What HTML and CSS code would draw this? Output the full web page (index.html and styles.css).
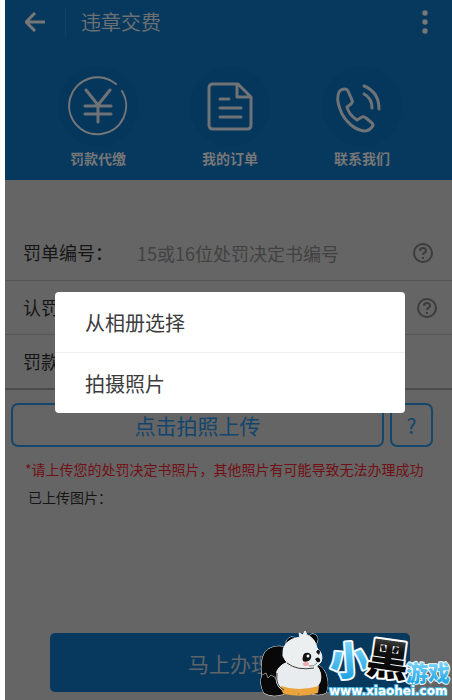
FILE: index.html
```html
<!DOCTYPE html>
<html lang="zh-CN">
<head>
<meta charset="utf-8">
<meta name="viewport" content="width=device-width, initial-scale=1">
<title>违章交费</title>
<link rel="stylesheet" href="styles.css">
</head>
<body>
<div class="screen">
  <header class="top">
    <div class="bar">
      <button class="icon-btn back" type="button" aria-label="返回">
        <svg width="20" height="20" viewBox="0 0 20 20"><path d="M10 1L1 10L10 19M1 10H20"/></svg>
      </button>
      <h1 class="title">违章交费</h1>
      <button class="icon-btn more" type="button" aria-label="更多">
        <svg width="6" height="26" viewBox="0 0 6 26"><circle cx="3" cy="4" r="2.700"/><circle cx="3" cy="13" r="2.700"/><circle cx="3" cy="22" r="2.700"/></svg>
      </button>
    </div>
    <nav class="shortcuts">
      <a class="shortcut" href="#pay">
        <span class="disc"><svg width="60" height="60" viewBox="0 0 60 60"><path d="M48 8A28.500 28.500 0 1 0 54 15"/><path class="bold" d="M18 14L30 29L42 14M30 29V46M17 30H43M17 38H43"/></svg></span>
        <span>罚款代缴</span>
      </a>
      <a class="shortcut" href="#orders">
        <span class="disc"><svg width="60" height="60" viewBox="0 0 60 60"><path class="bold" d="M37 8H13Q9 8 9 12V49Q9 53 13 53H47Q51 53 51 49V21L38 8H37V21H50M20 23H29M20 32H41M20 41H41"/></svg></span>
        <span>我的订单</span>
      </a>
      <a class="shortcut" href="#contact">
        <span class="disc"><svg width="60" height="60" viewBox="0 0 60 60"><path class="bold" d="M7 16Q9 13 13 13Q15 13 16 15L20 24Q21 26 19 28L15 31Q17 39 25 44L30 41Q32 40 34 42L40 47Q42 49 40 51Q37 55 32 55Q25 54 19 49Q11 42 8 33Q4 23 7 16ZM32 18Q40 22 40 32M32 10Q47 16 47 33"/></svg></span>
        <span>联系我们</span>
      </a>
    </nav>
  </header>

  <form class="form">
    <div class="rows">
      <div class="row">
        <label for="ticket">罚单编号：</label>
        <input id="ticket" type="text" placeholder="15或16位处罚决定书编号">
        <button class="help help-inset" type="button" aria-label="罚单编号说明"><svg width="22" height="22" viewBox="0 0 22 22"><circle cx="11" cy="11" r="9"/><path d="M8 9Q8 6 11 6Q14 6 14 9Q14 10 12 11Q11 12 11 13M11 15V17"/></svg></button>
      </div>
      <div class="row">
        <label for="confirm">认罚</label>
        <input id="confirm" type="text">
        <button class="help" type="button" aria-label="认罚说明"><svg width="22" height="22" viewBox="0 0 22 22"><circle cx="11" cy="11" r="9"/><path d="M8 9Q8 6 11 6Q14 6 14 9Q14 10 12 11Q11 12 11 13M11 15V17"/></svg></button>
      </div>
      <div class="row">
        <label for="amount">罚款</label>
        <input id="amount" type="text">
      </div>
    </div>
    <div class="upload">
      <button class="outline upload-main" type="button">点击拍照上传</button>
      <button class="outline upload-help" type="button">?</button>
    </div>
    <p class="warning">*请上传您的处罚决定书照片，其他照片有可能导致无法办理成功</p>
    <p class="uploaded">已上传图片：</p>
    <button class="submit" type="submit">马上办理</button>
  </form>

  <div class="menu" role="dialog" aria-label="选择图片">
    <button class="menu-item" type="button">从相册选择</button>
    <button class="menu-item" type="button">拍摄照片</button>
  </div>

  <svg class="brand" width="202" height="80" viewBox="0 0 202 80" role="img" aria-label="小黑游戏">
    <defs>
      <linearGradient id="sky" x1="0" y1="0" x2="0" y2="1"><stop offset="0" stop-color="#9ee4ff"/><stop offset="1" stop-color="#0a9be0"/></linearGradient>
      <linearGradient id="ink" x1="0" y1="0" x2="0" y2="1"><stop offset="0" stop-color="#777"/><stop offset=".4" stop-color="#111"/><stop offset="1" stop-color="#000"/></linearGradient>
    </defs>
    <g class="panda-edge">
      <path fill="#080808" d="M36 27Q22 24 15 32Q10 41 12 55Q9 64 14 73Q23 78 34 74L46 46ZM66 44Q75 47 77 58Q79 66 76 73Q67 77 58 72Z"/>
      <path fill="#080808" d="M38 28Q33 20 41 17Q47 17 48 22ZM59 17Q61 12 66 15Q70 20 65 25Z"/>
      <path fill="#e8ecee" d="M27 51Q31 43 40 42L66 45Q73 53 70 62Q66 71 58 73H39Q27 70 26 59Z"/>
      <path fill="#eceff0" d="M50 17L49 13L53 15L55 11L57 15Q65 18 67 28Q74 34 71 42Q65 50 52 49Q37 47 33 36Q31 20 50 17Z"/>
    </g>
    <path fill="#eba53c" d="M31 66Q48 72 69 66L68 73Q52 78 34 74Q31 71 31 66Z"/>
    <path fill="#111" d="M53 36Q54 32 59 33Q63 35 60 40Q56 43 53 41Q52 39 53 36ZM66 32Q69 27 70 32L69 35ZM65 39Q68 36 70 39Q71 43 67 42Z"/>
    <circle cx="58" cy="36" r="1.500" fill="#fff"/>
    <ellipse cx="56" cy="44" rx="3" ry="2" fill="#f7a9ad"/>
    <path class="panda-line" d="M59 46Q64 47 67 43M12 55L16 53L18 58L21 55L26 58M49 73L48 75"/>
    <path class="panda-line panda-dark" d="M37 43Q47 51 64 48M27 53Q25 66 34 70"/>
    <g class="brand-name">
      <text class="blue" x="80" y="55" font-size="39" transform="rotate(-4 98 45)">小</text>
      <text class="black" x="117" y="55" font-size="42" transform="rotate(8 138 40)">黑</text>
      <text class="blue game" x="156" y="61" font-size="22">游戏</text>
    </g>
    <text class="site" x="79" y="75" font-size="12">www.xiaohei.com</text>
  </svg>
</div>
</body>
</html>
```
FILE: styles.css
```css
* { box-sizing: border-box; }

body {
  margin: 0;
  background: #fff;
  color: #151515;
  font-family: "Noto Sans CJK SC", sans-serif;
}

button, input { font: inherit; color: inherit; }
button { padding: 0; border: 0; background: none; }
svg { display: block; }

.screen {
  position: relative;
  display: flex;
  flex-direction: column;
  min-height: 100vh;
  margin-left: 5px;
  background: #656565;
}

.top {
  height: 180px;
  background: #07395f;
  color: #777;
}

.bar {
  display: flex;
  align-items: center;
  height: 44px;
  padding: 0 24px 0 20px;
}

.icon-btn svg { fill: none; stroke: #777; stroke-width: 3; }
.icon-btn.more svg { fill: #777; stroke: none; }

.title {
  flex: 1;
  margin: 0 0 0 20px;
  padding-left: 15px;
  border-left: 1px solid #104067;
  color: #6c7073;
  font-size: 20px;
  font-weight: 400;
  line-height: 30px;
}

.shortcuts {
  display: grid;
  grid-template-columns: repeat(3, 1fr);
  padding: 22px 24px 0 27px;
}

.shortcut {
  display: flex;
  flex-direction: column;
  align-items: center;
  color: inherit;
  font-size: 14px;
  font-weight: 700;
  line-height: 20px;
  text-decoration: none;
}

.disc {
  display: grid;
  place-items: center;
  width: 80px;
  height: 80px;
  margin-bottom: 2px;
  border-radius: 50%;
  background: #05375d;
}

.disc svg {
  fill: none;
  stroke: #777;
  stroke-width: 2;
  stroke-linecap: round;
  stroke-linejoin: round;
}

.disc .bold { stroke: #6f7376; stroke-width: 3; }

.form {
  display: flex;
  flex: 1;
  flex-direction: column;
}

.rows {
  padding-top: 46px;
  border-bottom: 2px solid #4c4c4c;
}

.row {
  display: flex;
  align-items: center;
  height: 54px;
  padding: 0 14px 0 18px;
  font-size: 18px;
  line-height: 24px;
}

.row + .row { border-top: 1px solid #555; }
.row label { width: 114px; padding-bottom: 2px; }

.row input {
  flex: 1;
  min-width: 0;
  padding: 0;
  border: 0;
  outline: 0;
  background: none;
}

.row input::placeholder { color: #414141; opacity: 1; }
.help-inset { margin-right: 4px; }

.help svg {
  fill: none;
  stroke: #3c3c3c;
  stroke-width: 2;
}

.upload {
  display: flex;
  gap: 6px;
  padding: 13px 19px 0 6px;
}

.outline {
  height: 44px;
  border: 2px solid #15466b;
  border-radius: 7px;
  color: #12456d;
  font-size: 21px;
}

.upload-main { flex: 1; }
.upload-help { width: 43px; }

.warning, .uploaded {
  margin: 0;
  font-size: 14px;
  line-height: 20px;
}

.warning { padding: 12px 0 0 20px; color: #720f14; }
.uploaded { padding: 8px 0 0 23px; }

.submit {
  height: 59px;
  margin: auto 42px 8px 45px;
  border-radius: 5px;
  background: #07395f;
  color: #5f6468;
  font-size: 21px;
}

.menu {
  position: absolute;
  top: 292px;
  left: 50px;
  right: 47px;
  border-radius: 4px;
  background: #fff;
  overflow: hidden;
}

.menu-item {
  display: block;
  width: 100%;
  height: 60px;
  padding-left: 30px;
  color: #3c3c3c;
  font-size: 20px;
  text-align: left;
}

.menu-item + .menu-item {
  height: 61px;
  border-top: 1px solid #eee;
}

.brand {
  position: absolute;
  right: 0;
  bottom: 0;
}

.panda-edge path {
  stroke: #fff;
  stroke-width: 1;
  paint-order: stroke;
}

.panda-line { fill: none; stroke: #888; stroke-width: 1; }
.panda-dark { stroke: #333; }

.brand text {
  paint-order: stroke;
  stroke-linejoin: round;
}

.brand-name text {
  font-weight: 900;
  stroke: #fff;
  stroke-width: 4;
}

.brand .blue { fill: url(#sky); stroke: #f4fcff; }
.brand .black { fill: url(#ink); }
.brand .game { stroke-width: 2; }

.brand .site {
  fill: #fff;
  stroke: #4bb4dc;
  stroke-width: 2;
  font-family: "DejaVu Sans", sans-serif;
  font-weight: 700;
}
```
